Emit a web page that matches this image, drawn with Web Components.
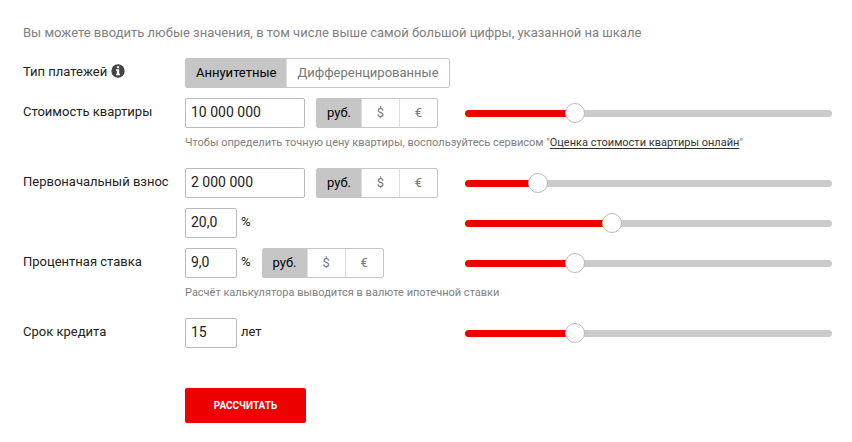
<!DOCTYPE html>
<html lang="ru">
<head>
<meta charset="utf-8">
<meta name="viewport" content="width=device-width, initial-scale=1">
<title>Ипотечный калькулятор</title>
<style>
  body {
    margin: 0;
    background: #fff;
    color: #222;
    font: 13px/20px Roboto, "Noto Sans", sans-serif;
  }
</style>
</head>
<body>

<mortgage-calculator></mortgage-calculator>

<script>
const CURRENCIES = 'руб.,$,€';

const getTemplate = html => {
  const template = document.createElement('template');
  template.innerHTML = html;
  return template.content.cloneNode(true);
}

/**
 * `<segment-switch>` is a joined row of radio buttons.
 * `options` is a comma separated list, the first one is checked.
 */
class SegmentSwitch extends HTMLElement {
  get options() {
    return (this.getAttribute('options') || '').split(',');
  }

  connectedCallback() {
    const segments = this.options.map((option, i) => `
      <label>
        <input type="radio" name="segment" value="${option}" ${i ? '' : 'checked'}>
        <span>${option}</span>
      </label>`).join('');

    this.attachShadow({mode: 'open'}).appendChild(getTemplate(`
      <style>
      :host {
        display: inline-flex;
      }

      fieldset {
        display: flex;
        box-sizing: border-box;
        height: 30px;
        min-width: 0;
        margin: 0;
        padding: 0;
        border: 1px solid #c6c6c6;
        border-radius: 2px;
      }

      label {
        display: grid;
        cursor: pointer;
      }

      label + label {
        border-left: 1px solid #ddd;
      }

      input,
      span {
        grid-area: 1 / 1;
      }

      input {
        appearance: none;
        margin: 0;
      }

      span {
        box-sizing: border-box;
        min-width: 37px;
        padding: 0 10px;
        color: #777;
        line-height: 28px;
        text-align: center;
      }

      input:checked + span {
        background: #c6c6c6;
        color: #000;
      }

      input:focus-visible + span {
        outline: 2px solid #888;
      }
      </style>

      <fieldset aria-label="${this.getAttribute('label')}">${segments}</fieldset>`));
  }
}

/**
 * `<range-slider>` is a range input over a two colour bar.
 */
class RangeSlider extends HTMLElement {
  connectedCallback() {
    this.attachShadow({mode: 'open'}).appendChild(getTemplate(`
      <style>
      :host {
        display: block;
      }

      div {
        display: flex;
        align-items: center;
        height: 7px;
        border-radius: 4px;
        background: linear-gradient(to right, #ee0000 var(--fill), #cbcbcb var(--fill));
      }

      /* half a thumb wider on both sides, so its centre meets the end of the fill */
      input {
        flex: 1;
        appearance: none;
        min-width: 0;
        height: 20px;
        margin: 0 -10px;
        background: none;
        cursor: pointer;
      }

      input::-webkit-slider-thumb {
        appearance: none;
        box-sizing: border-box;
        width: 20px;
        height: 20px;
        border: 1px solid #bbb;
        border-radius: 50%;
        background: #fff;
      }

      input::-moz-range-thumb {
        box-sizing: border-box;
        width: 20px;
        height: 20px;
        border: 1px solid #bbb;
        border-radius: 50%;
        background: #fff;
      }
      </style>

      <div><input type="range" min="0" max="100" value="${this.getAttribute('value')}"
        aria-label="${this.getAttribute('label')}"></div>`));

    this.__input = this.shadowRoot.querySelector('input');
    this.__input.addEventListener('input', () => this.updateFill());
    this.updateFill();
  }

  updateFill() {
    this.style.setProperty('--fill', `${this.__input.value}%`);
  }
}

/**
 * `<calc-field>` is one row of the form: label, text box, unit, switch and slider.
 * The default slot takes the note under the text box.
 */
class CalcField extends HTMLElement {
  connectedCallback() {
    const label = this.getAttribute('label');
    const name = label || this.getAttribute('name');
    const unit = this.getAttribute('unit');

    this.attachShadow({mode: 'open'}).appendChild(getTemplate(`
      <style>
      :host {
        display: grid;
        grid-template-columns: var(--columns);
        align-items: center;
      }

      .controls {
        grid-column: 2;
        display: flex;
        align-items: center;
        gap: 4px;
      }

      input {
        box-sizing: border-box;
        width: 120px;
        height: 30px;
        padding: 0 5px 2px;
        border: 1px solid #bbb;
        border-radius: 2px;
        background: #fff;
        color: #222;
        font: inherit;
        font-size: 14px;
      }

      :host([short]) input {
        width: 52px;
      }

      label,
      .unit {
        padding-bottom: 2px;
      }

      segment-switch {
        margin-left: 7px;
      }

      slot {
        grid-column: 2 / -1;
        display: block;
        color: #808080;
        font-size: 11px;
      }
      </style>

      ${label ? `<label for="value">${label}</label>` : ''}
      <div class="controls">
        <input id="value" type="text" value="${this.getAttribute('value')}"
          ${label ? '' : `aria-label="${name}"`}>
        ${unit ? `<span class="unit">${unit}</span>` : ''}
        ${this.hasAttribute('currency')
          ? `<segment-switch label="Валюта" options="${CURRENCIES}"></segment-switch>`
          : ''}
      </div>
      <range-slider label="${name}" value="${this.getAttribute('position')}"></range-slider>
      <slot></slot>`));
  }
}

class MortgageCalculator extends HTMLElement {
  connectedCallback() {
    this.attachShadow({mode: 'open'}).appendChild(getTemplate(`
      <style>
      :host {
        --columns: 162px 280px minmax(0, 1fr);
        display: block;
        padding: 23px 20px 19px 23px;
      }

      form {
        display: flex;
        flex-direction: column;
        gap: 10px;
      }

      .intro {
        margin: 0 0 5px;
        color: #808080;
      }

      .type {
        display: grid;
        grid-template-columns: var(--columns);
        align-items: center;
      }

      .type segment-switch {
        grid-column: 2 / -1;
      }

      .caption {
        display: flex;
        align-items: center;
        gap: 4px;
        padding-bottom: 2px;
      }

      .info {
        display: flex;
        padding: 0 0 2px;
        border: 0;
        background: none;
        cursor: pointer;
      }

      p.note {
        margin: 5px 0;
      }

      a {
        color: #333;
        text-underline-offset: 2px;
      }

      .submit {
        align-self: flex-start;
        width: 121px;
        height: 35px;
        margin: 30px 0 0 162px;
        padding: 0;
        border: 0;
        border-radius: 2px;
        background: #ee0000;
        color: #fff;
        font: inherit;
        font-size: 10px;
        font-weight: 700;
        text-transform: uppercase;
        cursor: pointer;
      }
      </style>

      <form>
        <p class="intro">Вы можете вводить любые значения, в том числе выше самой большой цифры, указанной на шкале</p>

        <div class="type">
          <div class="caption">
            Тип платежей
            <button class="info" type="button" aria-label="Подробнее">
              <svg width="14" height="14" viewBox="0 0 14 14" aria-hidden="true">
                <circle cx="7" cy="7" r="6.7" fill="#444"/>
                <path fill="#fff" d="M5.9 2.3h2.3v2H5.9zM5 5.3h3.2v4.4H9v1.5H5V9.7h.9V6.8H5z"/>
              </svg>
            </button>
          </div>
          <segment-switch label="Тип платежей" options="Аннуитетные,Дифференцированные"></segment-switch>
        </div>

        <calc-field label="Стоимость квартиры" value="10 000 000" currency position="30">
          <p class="note">Чтобы определить точную цену квартиры, воспользуйтесь сервисом "<a href="#">Оценка стоимости квартиры онлайн</a>"</p>
        </calc-field>
        <calc-field label="Первоначальный взнос" value="2 000 000" currency position="20"></calc-field>
        <calc-field name="Первоначальный взнос, %" value="20,0" unit="%" short position="40"></calc-field>
        <calc-field label="Процентная ставка" value="9,0" unit="%" short currency position="30">
          <p class="note">Расчёт калькулятора выводится в валюте ипотечной ставки</p>
        </calc-field>
        <calc-field label="Срок кредита" value="15" unit="лет" short position="30"></calc-field>

        <button class="submit" type="button">Рассчитать</button>
      </form>`));
  }
}

customElements.define('segment-switch', SegmentSwitch);
customElements.define('range-slider', RangeSlider);
customElements.define('calc-field', CalcField);
customElements.define('mortgage-calculator', MortgageCalculator);
</script>
</body>
</html>
